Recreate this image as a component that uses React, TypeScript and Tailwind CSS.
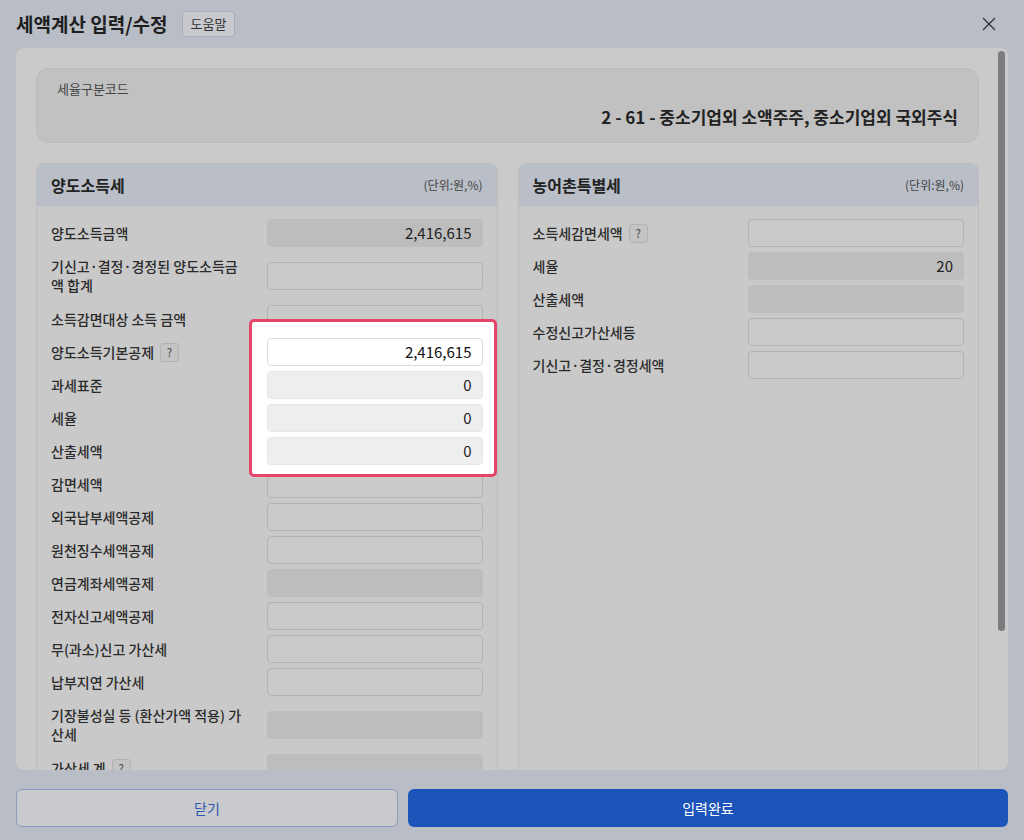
import React from "react";
import { X } from "lucide-react";

type Row = { label: string; kind: "empty" | "dis"; value?: string; help?: boolean; two?: boolean; hl?: boolean };

const left: Row[] = [
  { label: "양도소득금액", kind: "dis", value: "2,416,615" },
  { label: "기신고·결정·경정된 양도소득금액 합계", kind: "empty", two: true },
  { label: "소득감면대상 소득 금액", kind: "empty" },
  { label: "양도소득기본공제", kind: "empty", value: "2,416,615", help: true, hl: true },
  { label: "과세표준", kind: "dis", value: "0", hl: true },
  { label: "세율", kind: "dis", value: "0", hl: true },
  { label: "산출세액", kind: "dis", value: "0", hl: true },
  { label: "감면세액", kind: "empty" },
  { label: "외국납부세액공제", kind: "empty" },
  { label: "원천징수세액공제", kind: "empty" },
  { label: "연금계좌세액공제", kind: "dis" },
  { label: "전자신고세액공제", kind: "empty" },
  { label: "무(과소)신고 가산세", kind: "empty" },
  { label: "납부지연 가산세", kind: "empty" },
  { label: "기장불성실 등 (환산가액 적용) 가산세", kind: "dis", two: true },
  { label: "가산세 계", kind: "dis", help: true },
];

const right: Row[] = [
  { label: "소득세감면세액", kind: "empty", help: true },
  { label: "세율", kind: "dis", value: "20" },
  { label: "산출세액", kind: "dis" },
  { label: "수정신고가산세등", kind: "empty" },
  { label: "기신고·결정·경정세액", kind: "empty" },
];

function Help() {
  return (
    <span className="ml-[6px] inline-flex h-[19px] w-[19px] items-center justify-center rounded-[3px] border border-[#b3b3b3] bg-[#c4c4c4] text-[11px] text-[#555]">?</span>
  );
}

function Field({ r }: { r: Row }) {
  let cls = "";
  if (r.hl) {
    cls = r.kind === "dis" ? "relative z-20 bg-[#eeeeef] border-[#e8e8e8] text-[#222]" : "relative z-20 bg-white border-[#dcdcdc] text-[#111]";
  } else {
    cls = r.kind === "dis" ? "bg-[#bdbdbd] border-[#bdbdbd] text-[#222]" : "bg-[#cacaca] border-[#b3b3b3] text-[#222]";
  }
  return (
    <div className={`flex h-[28px] w-[216px] shrink-0 items-center justify-end rounded-[4px] border px-[10px] text-[15px] ${cls}`}>
      {r.value}
    </div>
  );
}

function Rows({ rows }: { rows: Row[] }) {
  return (
    <div className="flex flex-col gap-[5px] px-[14px] pt-[13px]">
      {rows.map((r, i) => (
        <div key={i} className={`flex items-center justify-between ${r.two ? "my-[5px]" : ""}`}>
          <div className={`flex items-center text-[14px] font-medium leading-[19px] text-[#2b2b2b] ${r.two ? "w-[190px]" : "h-[28px]"}`}>
            <span>{r.label}</span>
            {r.help && <Help />}
          </div>
          <Field r={r} />
        </div>
      ))}
    </div>
  );
}

function Panel({ title, rows }: { title: string; rows: Row[] }) {
  return (
    <div className="h-[640px] flex-1 overflow-hidden rounded-lg border border-[#bdbdbd] bg-[#c9c9c9]">
      <div className="flex h-[42px] items-center justify-between bg-[#b9bec7] px-[14px]">
        <span className="text-[16px] font-bold text-[#222]">{title}</span>
        <span className="text-[12px] text-[#444]">(단위:원,%)</span>
      </div>
      <Rows rows={rows} />
    </div>
  );
}

export default function App() {
  return (
    <div className="relative h-[840px] w-[1024px] overflow-hidden bg-[#b9bdc6]" style={{ fontFamily: '"Noto Sans CJK KR", "Noto Sans", sans-serif' }}>
      <div className="flex h-[48px] items-center px-[16px]">
        <span className="text-[19px] font-bold text-[#1f1f1f]">세액계산 입력/수정</span>
        <span className="ml-[14px] rounded-[4px] border border-[#a9adb5] bg-[#c7c9cd] px-[8px] py-[2px] text-[13px] text-[#333]">도움말</span>
        <X className="ml-auto mr-[8px] h-[22px] w-[22px] text-[#333]" strokeWidth={1.5} />
      </div>
      <div className="relative mx-[16px] h-[722px] overflow-hidden rounded-lg bg-[#cacaca]">
        <div className="absolute right-[3px] top-[3px] h-[580px] w-[7px] rounded-full bg-[#7b7c80]" />
        <div className="px-[20px] pt-[20px] pr-[29px]">
          <div className="h-[75px] rounded-xl border border-[#bcbcbc] bg-[#c1c1c1] px-[20px] pt-[10px]">
            <div className="text-[13px] text-[#444]">세율구분코드</div>
            <div className="mt-[5px] text-right text-[17px] font-bold text-[#222]">2 - 61 - 중소기업외 소액주주, 중소기업외 국외주식</div>
          </div>
          <div className="mt-[20px] flex items-start gap-[20px]">
            <Panel title="양도소득세" rows={left} />
            <Panel title="농어촌특별세" rows={right} />
          </div>
        </div>
      </div>
      <div className="absolute left-[249px] top-[319px] z-10 h-[158px] w-[248px] rounded-[5px] border-[3px] border-[#e6456a] bg-white" />
      <div className="mt-[19px] flex gap-[10px] px-[16px]">
        <button className="h-[38px] w-[382px] rounded-[6px] border border-[#8d9cc0] bg-[#c9cacd] text-[14px] text-[#2c56b0]">닫기</button>
        <button className="h-[38px] flex-1 rounded-[6px] bg-[#1c54b9] text-[14px] text-white">입력완료</button>
      </div>
    </div>
  );
}
